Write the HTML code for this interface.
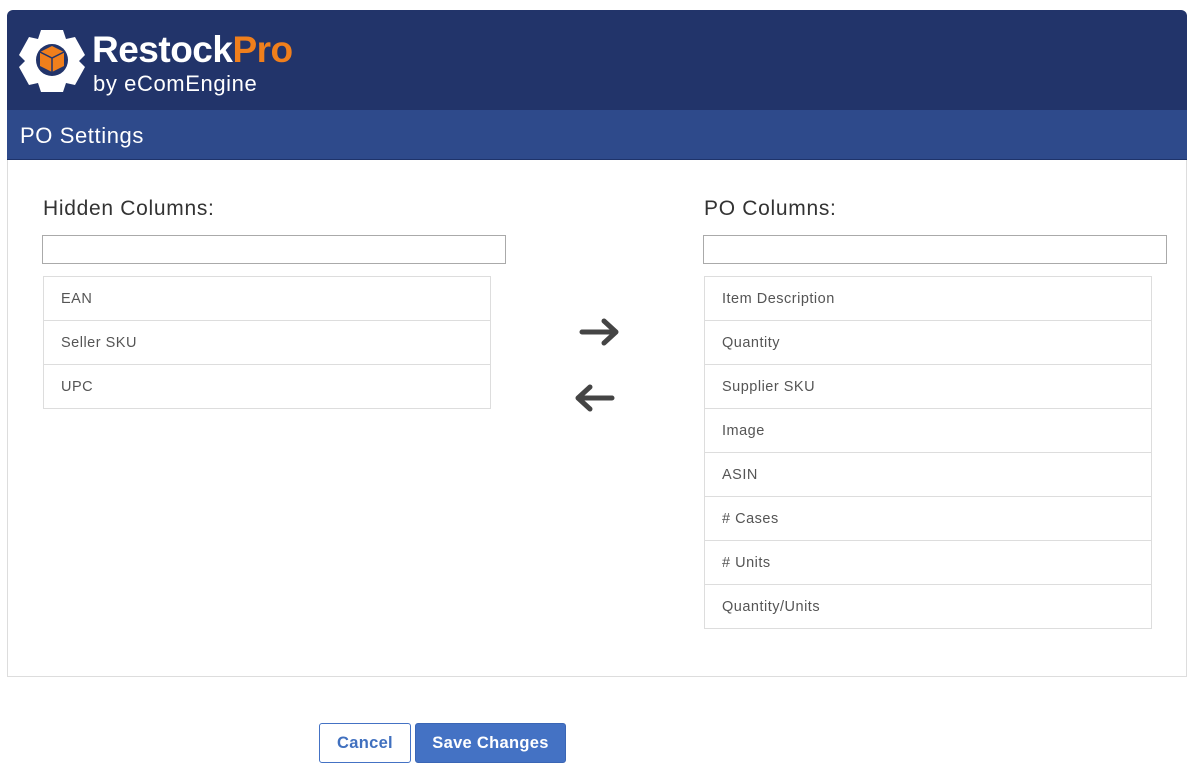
<!DOCTYPE html>
<html><head><meta charset="utf-8"><style>
*{box-sizing:border-box;margin:0;padding:0}
body{width:1200px;height:780px;background:#fff;font-family:"Liberation Sans","DejaVu Sans",sans-serif;position:relative;overflow:hidden}
.hdr{position:absolute;left:7px;top:10px;width:1180px;height:100px;background:#22346a;border-radius:6px 6px 0 0}
.sub{position:absolute;left:7px;top:110px;width:1180px;height:50px;background:#2e4a8b;color:#fff;font-size:22px;letter-spacing:0.6px;padding:13px 0 0 13px;border-bottom:1px solid #1e336a}
.panel{position:absolute;left:7px;top:160px;width:1180px;height:517px;border:1px solid #ddd;border-top:none}
.lbl{position:absolute;font-size:21px;letter-spacing:0.7px;color:#333}
.inp{position:absolute;height:29px;border:1px solid #aaa;width:464px}
.list{position:absolute;width:448px;border:1px solid #ddd;border-bottom:none}
.list div{height:44px;border-bottom:1px solid #ddd;font-size:14.5px;letter-spacing:0.5px;color:#555;padding:14px 0 0 17px}
.btn{position:absolute;top:723px;height:40px;border-radius:3px;font-size:16.5px;letter-spacing:0.3px;font-weight:bold;text-align:center;line-height:38px}
</style></head><body>
<div class="hdr">
<svg style="position:absolute;left:12px;top:18px" width="66" height="64" viewBox="0 0 66 64">
<path fill="#fff" d="M22 2h22l3 9 9-2 10 18-6 6 6 6-10 18-9-2-3 9H22l-3-9-9 2L0 39l6-6-6-6L10 9l9 2z"/>
<circle cx="33" cy="32" r="16" fill="#22346a"/>
<path fill="#f07f1c" d="M33 18l12 6v14l-12 6-12-6V24z"/>
<path stroke="#22346a" stroke-width="1.5" fill="none" d="M21 24l12 6 12-6M33 30v14"/>
</svg>
<div style="position:absolute;left:85px;top:20px;color:#fff;font-size:37px;font-weight:bold;letter-spacing:-0.5px;line-height:40px">Restock<span style="color:#f07f1c">Pro</span></div>
<div style="position:absolute;left:86px;top:62px;color:#fff;font-size:22px;letter-spacing:0.6px;line-height:24px">by eComEngine</div>
</div>
<div class="sub">PO Settings</div>
<div class="panel"></div>
<div class="lbl" style="left:43px;top:197px">Hidden Columns:</div>
<div class="lbl" style="left:704px;top:197px">PO Columns:</div>
<div class="inp" style="left:42px;top:235px"></div>
<div class="inp" style="left:703px;top:235px"></div>
<div class="list" style="left:43px;top:276px"><div>EAN</div><div>Seller SKU</div><div>UPC</div></div>
<div class="list" style="left:704px;top:276px"><div>Item Description</div><div>Quantity</div><div>Supplier SKU</div><div>Image</div><div>ASIN</div><div># Cases</div><div># Units</div><div>Quantity/Units</div></div>
<svg style="position:absolute;left:578px;top:316px" width="44" height="32" viewBox="0 0 44 32"><path d="M4 16h34M26 5l12 11-12 11" stroke="#444" stroke-width="5" fill="none" stroke-linecap="round" stroke-linejoin="round"/></svg>
<svg style="position:absolute;left:572px;top:382px" width="44" height="32" viewBox="0 0 44 32"><path d="M40 16H6M18 5L6 16l12 11" stroke="#444" stroke-width="5" fill="none" stroke-linecap="round" stroke-linejoin="round"/></svg>
<div class="btn" style="left:319px;width:92px;border:1px solid #4472c4;color:#4070bf;background:#fff">Cancel</div>
<div class="btn" style="left:415px;width:151px;background:#4472c4;color:#fff;border:1px solid #3a66b5">Save Changes</div>
</body></html>
